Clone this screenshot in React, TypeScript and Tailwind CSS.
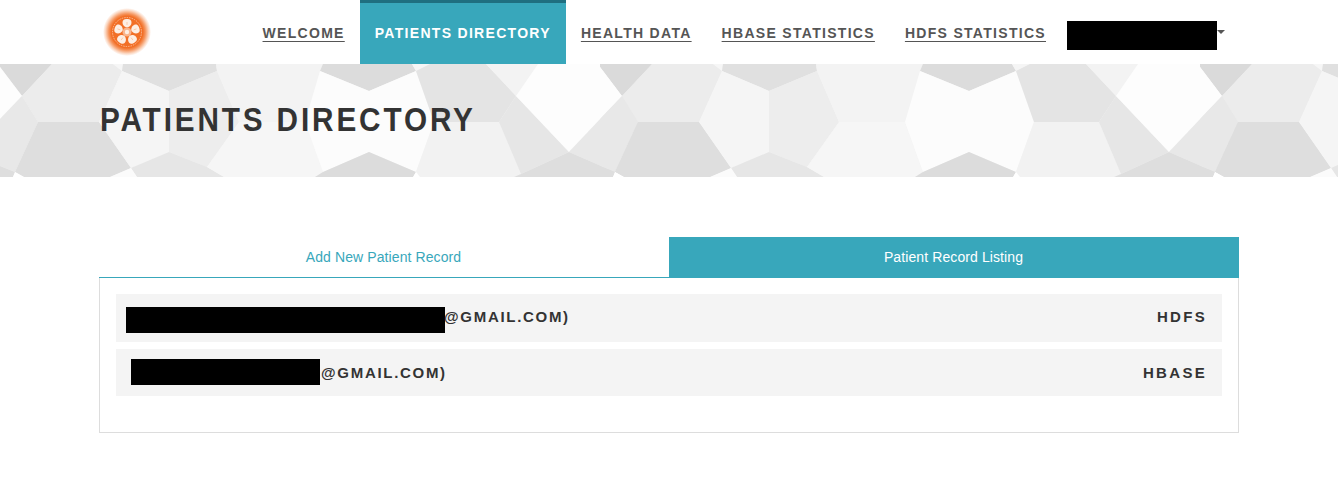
import React from "react";

const font = "font-['Liberation_Sans',Arial,sans-serif]";

// one repeat of the hero's polygon wallpaper, it comes back every 600px
const tile: [string, string][] = [
	["0,0 52,0 22,32 0,3", "#dadada"],
	["0,3 22,32 0,55", "#fdfdfd"],
	["52,0 113,0 122,7 99,58 38,58 22,32", "#ececec"],
	["113,0 123,0 122,7", "#f6f6f6"],
	["0,55 22,32 38,58 15,108 0,102", "#e8e8e8"],
	["38,58 99,58 131,104 110,113 24,113 15,108", "#dedede"],
	["0,102 15,108 13,113 0,113", "#dedede"],
	["15,108 24,113 13,113", "#ffffff"],
	["123,0 216,0 217,7 169,27 122,7", "#e0e0e0"],
	["122,7 169,27 169,88 131,104 99,58", "#f5f5f5"],
	["169,27 217,7 239,58 207,103 169,88", "#ededed"],
	["131,104 169,88 207,103 224,113 137,113", "#e6e6e6"],
	["131,104 137,113 110,113", "#fbfbfb"],
	["217,7 216,0 323,0 320,7 305,58 239,58", "#f3f3f3"],
	["239,58 305,58 323,108 315,113 224,113 207,103", "#f6f6f6"],
	["323,0 412,0 416,7 369,27 320,7", "#dcdcdc"],
	["320,7 369,27 416,7 434,58 416,108 369,88 323,108 305,58", "#fcfcfc"],
	["323,108 369,88 416,108 413,113 315,113", "#dcdcdc"],
	["412,0 430,0 416,7", "#f5f5f5"],
	["416,7 430,0 486,0 516,32 499,58 434,58", "#e4e4e4"],
	["434,58 499,58 521,110 514,113 420,113 416,108", "#f2f2f2"],
	["416,108 420,113 413,113", "#ffffff"],
	["499,58 516,32 569,88 521,110", "#e6e6e6"],
	["486,0 538,0 516,32", "#f3f3f3"],
	["538,0 600,0 622,32 569,88 516,32", "#fdfdfd"],
	["600,0 652,0 622,32", "#dadada"],
	["622,32 638,58 615,108 569,88", "#e8e8e8"],
	["521,110 569,88 615,108 613,113 514,113", "#dedede"],
	["652,0 713,0 722,7 699,58 638,58 622,32", "#ececec"],
	["638,58 699,58 731,104 710,113 624,113 615,108", "#dedede"],
	["615,108 624,113 613,113", "#ffffff"],
];

const HeroPattern = () => (
	<svg className="absolute inset-0 w-full h-full" viewBox="0 0 1338 113" preserveAspectRatio="none">
		{[0, 600, 1200].map((offset) => (
			<g key={offset} transform={`translate(${offset} 0)`}>
				{tile.map(([points, fill]) => (
					<polygon key={points} points={points} fill={fill} />
				))}
			</g>
		))}
	</svg>
);

const Logo = () => (
	<svg width="50" height="50" viewBox="0 0 50 50">
		<defs>
			<radialGradient id="glow">
				<stop offset="0.66" stopColor="#f26f26" />
				<stop offset="0.76" stopColor="#f5945c" />
				<stop offset="0.9" stopColor="#fbd8c3" />
				<stop offset="1" stopColor="#ffffff" />
			</radialGradient>
		</defs>
		<circle cx="25" cy="25" r="24" fill="url(#glow)" />
		<circle cx="25" cy="25" r="14.5" fill="none" stroke="#fde3d2" strokeWidth="0.6" strokeDasharray="1.5 1" />
		{[0, 72, 144, 216, 288].map((deg) => (
			<g key={deg} transform={`rotate(${deg} 25 25)`}>
				<path d="M25 20.5 C20.5 19.5 19.5 15 21.5 13 C23 11.8 27 11.8 28.5 13 C30.5 15 29.5 19.5 25 20.5Z" fill="#fdeee3" />
				<path d="M25 18 V15" stroke="#f8b48c" strokeWidth="0.6" />
			</g>
		))}
		<circle cx="25" cy="25" r="4.5" fill="#f9b48c" />
		<circle cx="25" cy="25" r="2.2" fill="#fdeee3" />
	</svg>
);

const NavLink = ({ label }: { label: string }) => (
	<a className="px-[15px] pt-[2px] h-16 flex items-center text-[14px] font-bold tracking-[1.3px] uppercase underline underline-offset-[3px] text-[#555555]">
		{label}
	</a>
);

const App = () => {
	return (
		<div className={`${font} bg-white min-h-[477px] text-[#333333]`}>
			<header className="w-[1140px] ml-[99px] h-16 flex items-center">
				<div className="ml-[3px]">
					<Logo />
				</div>
				<nav className="ml-auto flex items-center">
					<NavLink label="Welcome" />
					<a className="px-[15px] h-16 flex items-center border-t-[3px] border-[#1f6f80] bg-[#38a7bb] text-white text-[14px] font-bold tracking-[1.3px] uppercase">
						Patients Directory
					</a>
					<NavLink label="Health Data" />
					<NavLink label="HBase Statistics" />
					<NavLink label="HDFS Statistics" />
					<div className="ml-[6px] mr-[14px] flex items-center">
						<div className="w-[150px] h-[29px] mt-[7px] bg-black" />
						<div className="mt-[-1px] border-x-[4px] border-t-[4px] border-x-transparent border-t-[#555555]" />
					</div>
				</nav>
			</header>

			<section className="relative h-[113px] bg-[#f4f4f4]">
				<HeroPattern />
				<h1 className="relative ml-[100px] pt-[38px] text-[33px] leading-[36px] font-bold tracking-[3.2px] uppercase origin-left scale-x-[0.9] whitespace-nowrap">
					Patients Directory
				</h1>
			</section>

			<main className="w-[1140px] ml-[99px] mt-[60px]">
				<div className="flex h-[41px] border-b border-[#38a7bb] text-[14px] tracking-[0.1px]">
					<div className="w-1/2 pr-[1px] flex items-center justify-center text-[#38a7bb]">Add New Patient Record</div>
					<div className="w-1/2 pr-[1px] flex items-center justify-center bg-[#38a7bb] text-white">Patient Record Listing</div>
				</div>
				<div className="h-[155px] border border-t-0 border-[#dddddd] px-4 pt-4 flex flex-col gap-[7px] text-[15px] leading-5 font-bold tracking-[1.7px] uppercase">
					<div className="h-12 bg-[#f4f4f4] flex items-start justify-between pl-[10px] pr-[15px]">
						<div className="flex items-start">
							<div className="w-[319px] h-[26px] mt-[13px] bg-black" />
							<span className="mt-[13px] -ml-[1px]">@gmail.com)</span>
						</div>
						<span className="mt-[13px] tracking-[2.3px]">HDFS</span>
					</div>
					<div className="h-[47px] bg-[#f4f4f4] flex items-start justify-between pl-[15px] pr-[15px]">
						<div className="flex items-start">
							<div className="w-[189px] h-[26px] mt-[10px] bg-black" />
							<span className="mt-[14px] ml-[1px]">@gmail.com)</span>
						</div>
						<span className="mt-[14px] tracking-[2.3px]">HBASE</span>
					</div>
				</div>
			</main>
		</div>
	);
};

export default App;
